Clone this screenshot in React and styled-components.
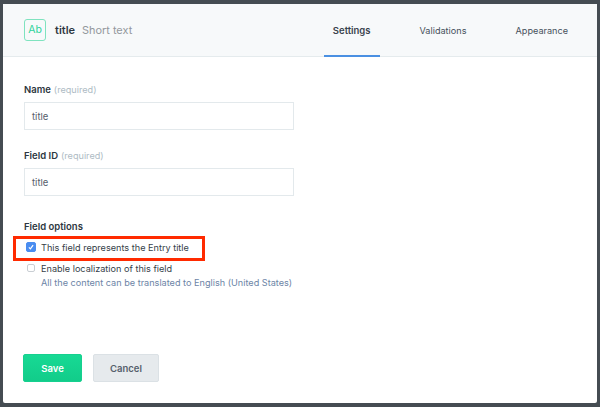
import React from "react";
import styled, { createGlobalStyle } from "styled-components";

const Global = createGlobalStyle`
  html, body { margin: 0; padding: 0; background: #454c52; }
  * { box-sizing: border-box; }
  #root { width: 600px; height: 407px; overflow: hidden; }
`;

const Page = styled.div`
  width: 600px;
  height: 407px;
  padding: 4px 3px;
  background: #454c52;
  font-family: Inter, "Liberation Sans", sans-serif;
`;

const Modal = styled.div`
  position: relative;
  width: 594px;
  height: 399px;
  background: #fff;
  border-radius: 2px;
  display: flex;
  flex-direction: column;
`;

const Header = styled.header`
  height: 53px;
  flex: none;
  display: flex;
  align-items: stretch;
  justify-content: space-between;
  padding: 0 20px 0 21px;
  background: #f7f9fa;
  border-bottom: 1px solid #e5ebed;
`;

const TitleGroup = styled.div`
  display: flex;
  align-items: center;
`;

const TypeIcon = styled.div`
  width: 22px;
  height: 22px;
  margin-right: 9px;
  margin-top: -1px;
  border: 1px solid #7fe3bf;
  border-radius: 3px;
  color: #2fd49a;
  font-size: 10.5px;
  display: flex;
  align-items: center;
  justify-content: center;
`;

const FieldName = styled.span`
  font-size: 11px;
  font-weight: 600;
  color: #2d3640;
  margin-right: 7px;
`;

const FieldType = styled.span`
  font-size: 10.9px;
  color: #94989d;
`;

const Tabs = styled.nav`
  display: flex;
  gap: 31px;
`;

const Tab = styled.div`
  position: relative;
  display: flex;
  align-items: center;
  justify-content: center;
  padding: 1px 9px 0;
  font-size: ${(p) => (p.$active ? 9.5 : 9.15)}px;
  font-weight: ${(p) => (p.$active ? 600 : 400)};
  color: ${(p) => (p.$active ? "#3a434d" : "#46505a")};
  border-bottom: 2px solid ${(p) => (p.$active ? "#4a90e2" : "transparent")};
  margin-bottom: -1px;
`;

const Body = styled.main`
  flex: 1;
  display: flex;
  flex-direction: column;
  padding: 27px 21px 21px 20px;
`;

const Label = styled.div`
  font-size: 9.5px;
  line-height: 12px;
  font-weight: 600;
  color: #2d3640;
  margin-bottom: 6px;
`;

const Required = styled.span`
  font-size: 9.15px;
  font-weight: 400;
  color: #aebbc4;
  margin-left: 3px;
`;

const Field = styled.div`
  margin-bottom: 20px;
  margin-left: 1px;
`;

const Input = styled.div`
  width: 270px;
  height: 28px;
  border: 1px solid #e3e9ec;
  padding: 0 7px;
  display: flex;
  align-items: center;
  font-size: 9.5px;
  color: #56606b;
`;

const Options = styled.section`
  margin: 5px 0 0 1px;
  display: flex;
  flex-direction: column;
`;

const OptionRow = styled.div`
  display: flex;
  align-items: center;
  height: 14px;
  margin-top: ${(p) => p.$top}px;
  font-size: 9.15px;
  color: #353e48;
`;

const Check = styled.span`
  width: ${(p) => (p.$checked ? 10 : 8)}px;
  height: ${(p) => (p.$checked ? 10 : 8)}px;
  margin: 0 ${(p) => (p.$checked ? 5 : 6)}px 0 ${(p) => (p.$checked ? 2 : 3)}px;
  border-radius: 2px;
  background: ${(p) => (p.$checked ? "#4a8df0" : "#fff")};
  border: 1px solid ${(p) => (p.$checked ? "#4a8df0" : "#c9ced3")};
  display: flex;
  align-items: center;
  justify-content: center;
  flex: none;
`;

const Hint = styled.div`
  font-size: 9.15px;
  line-height: 14px;
  color: #6c84a6;
  margin: 1px 0 0 17px;
`;

const Actions = styled.footer`
  margin-top: auto;
  display: flex;
  gap: 11px;
`;

const Button = styled.button`
  height: 28px;
  width: ${(p) => p.$w}px;
  padding: 0;
  border-radius: 2px;
  font: 600 9.5px Inter, "Liberation Sans", sans-serif;
  color: ${(p) => (p.$primary ? "#fff" : "#565f6c")};
  background: ${(p) => (p.$primary ? "linear-gradient(#17d994, #12cc8a)" : "#e6eaed")};
  border: 1px solid ${(p) => (p.$primary ? "#16d08f" : "#dbe1e5")};
`;

const Highlight = styled.div`
  position: absolute;
  left: 10px;
  top: 232px;
  width: 192px;
  height: 25px;
  border: 3px solid #ff2a00;
  pointer-events: none;
`;

export default function App() {
  return (
    <Page>
      <Global />
      <Modal>
        <Header>
          <TitleGroup>
            <TypeIcon>Ab</TypeIcon>
            <FieldName>title</FieldName>
            <FieldType>Short text</FieldType>
          </TitleGroup>
          <Tabs>
            <Tab $active>Settings</Tab>
            <Tab>Validations</Tab>
            <Tab>Appearance</Tab>
          </Tabs>
        </Header>
        <Body>
          <Field>
            <Label>Name<Required>(required)</Required></Label>
            <Input>title</Input>
          </Field>
          <Field>
            <Label>Field ID<Required>(required)</Required></Label>
            <Input>title</Input>
          </Field>
          <Options>
            <Label>Field options</Label>
            <OptionRow $top={1}>
              <Check $checked>
                <svg width="6" height="6" viewBox="0 0 10 10" fill="none" stroke="#fff" strokeWidth="2">
                  <path d="M1.5 5.5 4 8l4.5-6" />
                </svg>
              </Check>
              This field represents the Entry title
            </OptionRow>
            <OptionRow $top={7}>
              <Check />
              Enable localization of this field
            </OptionRow>
            <Hint>All the content can be translated to English (United States)</Hint>
          </Options>
          <Actions>
            <Button $primary $w={59}>Save</Button>
            <Button $w={66}>Cancel</Button>
          </Actions>
        </Body>
        <Highlight />
      </Modal>
    </Page>
  );
}
